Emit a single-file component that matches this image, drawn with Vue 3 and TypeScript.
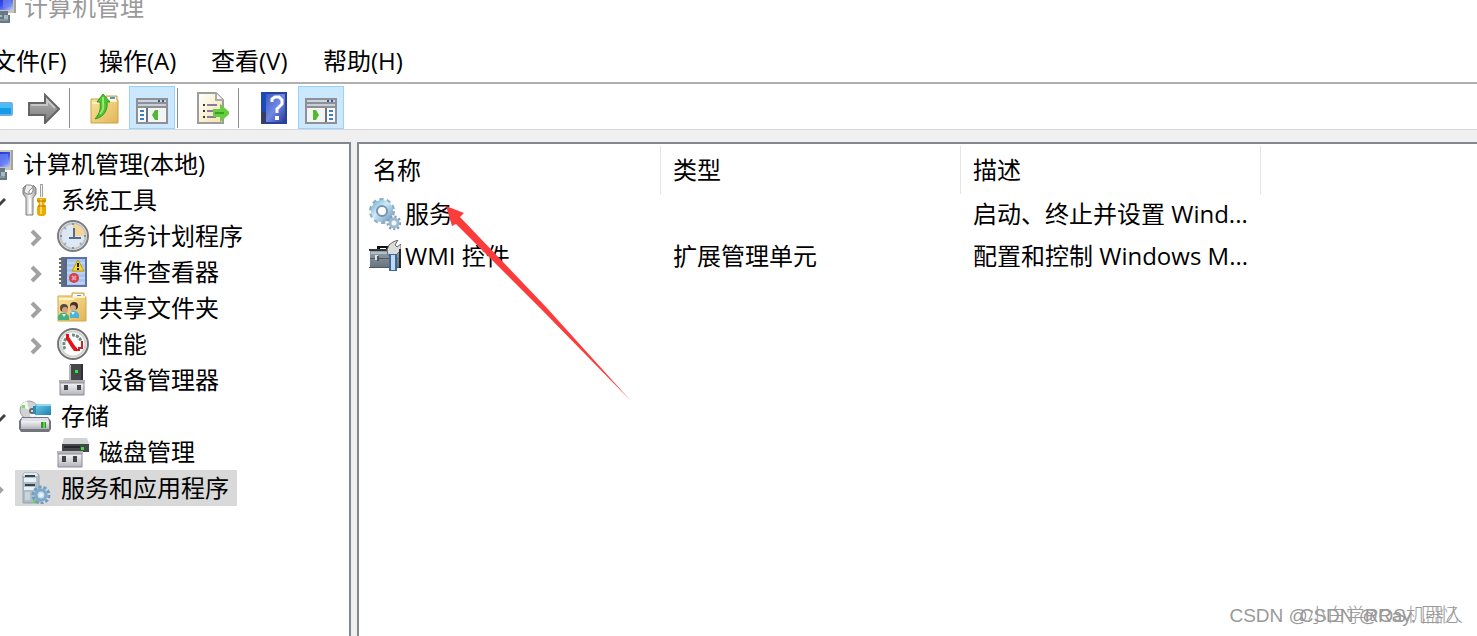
<script setup lang="ts">
interface TreeNode {
  id: string
  label: string
  icon: string
  level: number
  state: 'open' | 'closed' | 'leaf'
  selected?: boolean
}

interface ServiceRow {
  name: string
  icon: string
  type: string
  description: string
}

const menus: string[] = ['文件(F)', '操作(A)', '查看(V)', '帮助(H)']

const nodes: TreeNode[] = [
  { id: 'root', label: '计算机管理(本地)', icon: 'computer', level: 0, state: 'leaf' },
  { id: 'tools', label: '系统工具', icon: 'tools', level: 1, state: 'open' },
  { id: 'tasks', label: '任务计划程序', icon: 'clock', level: 2, state: 'closed' },
  { id: 'events', label: '事件查看器', icon: 'events', level: 2, state: 'closed' },
  { id: 'shares', label: '共享文件夹', icon: 'shared', level: 2, state: 'closed' },
  { id: 'perf', label: '性能', icon: 'gauge', level: 2, state: 'closed' },
  { id: 'devices', label: '设备管理器', icon: 'device', level: 2, state: 'leaf' },
  { id: 'storage', label: '存储', icon: 'storage', level: 1, state: 'open' },
  { id: 'disks', label: '磁盘管理', icon: 'disk', level: 2, state: 'leaf' },
  { id: 'services', label: '服务和应用程序', icon: 'server', level: 1, state: 'closed', selected: true },
]

const columns: string[] = ['名称', '类型', '描述']

const rows: ServiceRow[] = [
  { name: '服务', icon: 'gears', type: '', description: '启动、终止并设置 Wind...' },
  { name: 'WMI 控件', icon: 'toolbox', type: '扩展管理单元', description: '配置和控制 Windows M...' },
]
</script>

<template>
  <div class="window">
    <svg class="sprites" aria-hidden="true">
      <defs>
        <linearGradient id="gScreen" x1="0" y1="0" x2="1" y2="1">
          <stop offset="0" stop-color="#1a20c8" /><stop offset=".55" stop-color="#3c50e8" /><stop offset="1" stop-color="#b8ccff" />
        </linearGradient>
        <linearGradient id="gArrow" x1="0" y1="0" x2="0" y2="1">
          <stop offset="0" stop-color="#b4b4b4" /><stop offset="1" stop-color="#7c7c7c" />
        </linearGradient>
        <linearGradient id="gFolder" x1="0" y1="0" x2="1" y2="1">
          <stop offset="0" stop-color="#fbe6a0" /><stop offset="1" stop-color="#e2b658" />
        </linearGradient>
        <linearGradient id="gHelp" x1="0" y1="0" x2="1" y2="1">
          <stop offset="0" stop-color="#3c5cc4" /><stop offset=".5" stop-color="#7088e4" /><stop offset="1" stop-color="#2c3c98" />
        </linearGradient>
        <linearGradient id="gPage" x1="0" y1="0" x2="1" y2="1">
          <stop offset="0" stop-color="#ffffff" /><stop offset="1" stop-color="#f4e2a8" />
        </linearGradient>
        <linearGradient id="gMetal" x1="0" y1="0" x2="1" y2="0">
          <stop offset="0" stop-color="#9c9c9c" /><stop offset=".5" stop-color="#f4f4f4" /><stop offset="1" stop-color="#a0a0a0" />
        </linearGradient>
        <linearGradient id="gGear" x1="0" y1="0" x2="1" y2="1">
          <stop offset="0" stop-color="#8fb9d8" /><stop offset=".4" stop-color="#cceaf8" /><stop offset="1" stop-color="#80a6c4" />
        </linearGradient>
        <linearGradient id="gCase" x1="0" y1="0" x2="0" y2="1">
          <stop offset="0" stop-color="#93a0aa" /><stop offset="1" stop-color="#65727c" />
        </linearGradient>
        <linearGradient id="gDrive" x1="0" y1="0" x2="0" y2="1">
          <stop offset="0" stop-color="#f4f4f6" /><stop offset="1" stop-color="#b4b4bc" />
        </linearGradient>
        <linearGradient id="gCyan" x1="0" y1="0" x2="1" y2="1">
          <stop offset="0" stop-color="#74cdec" /><stop offset="1" stop-color="#1c7fae" />
        </linearGradient>
      </defs>

      <symbol id="computer" viewBox="0 0 32 32">
        <path d="M8 2h24v20H8z" fill="#c9c6b8" />
        <path d="M10 4h19v15H10z" fill="url(#gScreen)" />
        <path d="M19 6h8v10h-8z" fill="#6f86f4" opacity=".7" />
        <path d="M30 2h2v20h-2z" fill="#a5a298" />
        <path d="M10 20h14v4h2v8H8v-8h2z" fill="#667886" />
        <path d="M14 24h4v2h-4zM20 24h4v4h-4z" fill="#a8b8c0" />
        <path d="M8 28h16v2H8z" fill="#8496a0" />
      </symbol>

      <symbol id="tools" viewBox="0 0 32 32">
        <path d="M7 1L4 4v6l3 4v17h7V14l3-4V4l-3-3v6l-2 3H9L7 8z" fill="url(#gMetal)" stroke="#808080" />
        <path d="M7 1h5l2 2-4 4v3H8L5 8z" fill="#ececec" stroke="#8c8c8c" />
        <path d="M10 14h2v15h-2z" fill="#fff" />
        <path d="M21 0h3v13h-3z" fill="#a2a2a2" /><path d="M22 1h1v12h-1z" fill="#eee" />
        <path d="M18 14h9v3l-2 3 2 3v7l-2 2h-5l-2-2v-7l2-3-2-3z" fill="#eea900" />
        <path d="M21 15h2v15h-2z" fill="#ffdb60" />
        <path d="M18 17h9M19 22h8" stroke="#b07400" />
      </symbol>

      <symbol id="clock" viewBox="0 0 32 32">
        <circle cx="16" cy="16" r="15" fill="#e9edf0" stroke="#7c7c7c" stroke-width="2" />
        <circle cx="16" cy="16" r="12.5" fill="#dce9f4" stroke="#c4c4c4" stroke-width="2" />
        <path d="M16 16V4a12 12 0 0 1 12 12z" fill="#f2d49c" />
        <path d="M17 8v10h7M12 18h5" fill="none" stroke="#586c80" stroke-width="2" />
        <path d="M15 3h2v2h-2zM15 27h2v2h-2zM3 15h2v2H3zM27 15h2v2h-2z" fill="#8496a4" />
        <path d="M7 7l2 2M7 25l2-2M25 25l-2-2" stroke="#a0acb8" stroke-width="2" />
      </symbol>

      <symbol id="events" viewBox="0 0 32 32">
        <path d="M4 1h26v30H4z" fill="#5a70ac" />
        <path d="M8 3h20v26H8z" fill="#a9c5ec" />
        <path d="M8 7h20M8 12h20M8 17h20M8 22h20M8 27h20" stroke="#bcd2f2" stroke-width="2" />
        <path d="M6 2h4v28H6z" fill="#54678c" />
        <path d="M2 3h6M2 7h6M2 11h6M2 15h6M2 19h6M2 23h6M2 27h6" stroke="#6b6b6b" stroke-width="2" />
        <path d="M21 4l6 11H15z" fill="#f8d728" stroke="#bd9b00" />
        <path d="M20 7h2v4h-2zM20 12h2v2h-2z" fill="#222" />
        <circle cx="17" cy="22" r="5" fill="#d13f4c" />
        <path d="M15 20l4 4m0-4l-4 4" stroke="#ee9aa2" stroke-width="2" />
      </symbol>

      <symbol id="shared" viewBox="0 0 32 32">
        <path d="M1 4h14V1h12v4h2v24H1z" fill="url(#gFolder)" stroke="#d2a64b" />
        <path d="M16 2h10v3H16z" fill="#fff" /><path d="M20 3h4v2h-4z" fill="#4a9ae0" />
        <path d="M2 7h14l2-2h10" fill="none" stroke="#fff4c8" stroke-width="2" />
        <circle cx="7" cy="16" r="4" fill="#544c40" /><circle cx="8" cy="18" r="3" fill="#d6a078" />
        <path d="M1 28v-4l3-3h5l3 3v4z" fill="#45b080" /><path d="M5 22l2 3 2-3z" fill="#dff8ed" />
        <circle cx="17" cy="14" r="4" fill="#40322e" /><circle cx="16" cy="16" r="3" fill="#dca882" />
        <path d="M13 26v-5l2-2h4l3 3v4z" fill="#4cb3d5" /><path d="M14 20l2 3 2-3z" fill="#e0f8ff" />
      </symbol>

      <symbol id="gauge" viewBox="0 0 32 32">
        <circle cx="16" cy="16" r="15" fill="#f8f8f8" stroke="#747474" stroke-width="2" />
        <circle cx="16" cy="16" r="12.5" fill="#fff" stroke="#d2d2d2" stroke-width="2" />
        <path d="M8 21a9 9 0 0 1 3-12m4-2a9 9 0 0 1 9 6" fill="none" stroke="#6e8c80" stroke-width="3" stroke-dasharray="3 1" />
        <path d="M25 13v7h-3v2h-3" stroke="#d42020" stroke-width="2" fill="none" />
        <path d="M9 6h3v3l2 3 2 3 2 3 2 2v3h-3l-3-4-3-5-2-3z" fill="#e80f16" />
      </symbol>

      <symbol id="device" viewBox="0 0 32 32">
        <path d="M13 0h12v18H13z" fill="#45484a" /><path d="M12 1h2v17h-2z" fill="#b5b5b5" />
        <path d="M24 0h2v18h-2z" fill="#2e3032" /><path d="M18 6h3v3h-3z" fill="#38e040" />
        <path d="M2 16h26v3H2z" fill="#b0b0b4" /><path d="M3 19h24v12H3z" fill="url(#gDrive)" stroke="#8c8c94" />
        <path d="M7 21h4v5H7zM20 21h4v5h-4z" fill="#3f4246" />
      </symbol>

      <symbol id="storage" viewBox="0 0 32 32">
        <circle cx="10" cy="10" r="9" fill="#d0d2d4" stroke="#9c9c9c" />
        <path d="M10 10L2 6a9 9 0 0 1 6-5zM10 10l8 5a9 9 0 0 1-6 4z" fill="#f5f5f5" />
        <circle cx="13" cy="11" r="3" fill="#666" /><circle cx="13" cy="11" r="1" fill="#fff" />
        <path d="M3 5h3v3H3z" fill="#77e060" />
        <path d="M16 4h16v11H16z" fill="url(#gCyan)" /><path d="M18 4h14v2H18z" fill="#90daf3" />
        <path d="M14 6h3v8h-3z" fill="#3189b0" />
        <path d="M3 17h26l3 4v8l-2 3H2l-2-3v-8z" fill="#73747c" />
        <path d="M3 18h26l1 3H2z" fill="#e0e0e8" /><path d="M2 21h28v8H2z" fill="url(#gDrive)" />
        <path d="M22 22h5v6h-5z" fill="#3d8d38" /><path d="M24 22h2v6h-2z" fill="#4bdd3f" />
      </symbol>

      <symbol id="disk" viewBox="0 0 32 32">
        <path d="M7 2h23l2 6H5z" fill="#d1d3d4" /><path d="M5 8h27v8H5z" fill="#444749" />
        <path d="M7 10h16v2H7z" fill="#24282a" /><path d="M24 11h3v3h-3z" fill="#37e13b" />
        <path d="M0 15h26v3H0z" fill="#b6b6ba" /><path d="M1 18h24v13H1z" fill="url(#gDrive)" stroke="#8c8c94" />
        <path d="M5 20h4v6H5zM16 20h4v6h-4z" fill="#3f4246" />
      </symbol>

      <symbol id="server" viewBox="0 0 32 32">
        <path d="M5 1h13l2 2v28H4V3z" fill="#aebdc6" stroke="#93a4ae" />
        <path d="M5 1h13l1 3H4z" fill="#dfe8ec" /><path d="M6 3h10v2H6zM6 12h10v2H6z" fill="#34454e" />
        <path d="M5 6h12v4H5zM5 15h12v3H5z" fill="#e8f2f6" /><path d="M6 20h5v8H6z" fill="#c9d5dc" />
        <path d="M14 28h4v3h-4z" fill="#76d44a" />
        <circle cx="22" cy="23" r="8" fill="none" stroke="#6b9dc6" stroke-width="3" stroke-dasharray="3 2" />
        <circle cx="22" cy="23" r="5" fill="#c7dced" stroke="#7ca8ca" stroke-width="3" /><circle cx="22" cy="23" r="2" fill="#edf5fa" />
      </symbol>

      <symbol id="gears" viewBox="0 0 32 32">
        <circle cx="13" cy="13" r="11" fill="none" stroke="#86b0cc" stroke-width="4" stroke-dasharray="4 3" />
        <circle cx="13" cy="13" r="8" fill="none" stroke="url(#gGear)" stroke-width="6" />
        <circle cx="13" cy="13" r="5" fill="#fff" stroke="#7595ae" stroke-width="2" />
        <circle cx="25" cy="25" r="6" fill="none" stroke="#7d9dba" stroke-width="3" stroke-dasharray="2 2" />
        <circle cx="25" cy="25" r="4" fill="#f6fafc" stroke="#9dbacf" stroke-width="3" />
      </symbol>

      <symbol id="toolbox" viewBox="0 0 32 32">
        <path d="M8 6h12v4h-3V8H11v2H8z" fill="#111" />
        <path d="M1 10h29v18H1z" fill="url(#gCase)" /><path d="M0 9h30v2H0z" fill="#2f383e" />
        <path d="M2 12h26v2H2z" fill="#b4c0c7" /><path d="M1 18h28v1H1zM0 27h30v1H0z" fill="#4d5961" />
        <path d="M6 15h3v5H6z" fill="#dfe5e7" /><path d="M8 16h2v5H8z" fill="#4a545a" />
        <path d="M18 10l2-5 4-3 5-2-3 5 2 2 4-3v6l-5 5h-8z" fill="#dcdcdc" stroke="#666" />
        <path d="M20 14h8v17h-8z" fill="#3f6795" /><path d="M22 15h4v15h-4z" fill="#bfdaf5" />
        <path d="M30 9h2v19h-2z" fill="#22282c" />
      </symbol>

      <symbol id="back" viewBox="0 0 32 32">
        <path d="M1 16L15 2v8h15q2 0 2 2v10q0 2-2 2H15v8z" fill="#6eaee0" />
        <path d="M4 16l9-9v5h17v10H13v5z" fill="#169be8" /><path d="M13 12h17v4H13z" fill="#46bdf6" />
      </symbol>

      <symbol id="forward" viewBox="0 0 32 32">
        <path d="M1 11h16V3l14 14-14 14v-8H1z" fill="url(#gArrow)" stroke="#656565" stroke-width="2" />
        <path d="M3 13h16V8l8 8" fill="none" stroke="#c6c6c6" stroke-width="2" />
      </symbol>

      <symbol id="up" viewBox="0 0 32 32">
        <path d="M2 7h15V4h11v4h1v23H2z" fill="url(#gFolder)" stroke="#c9a14f" />
        <path d="M18 5h9v3h-9z" fill="#fff" /><path d="M21 5h5v2h-5z" fill="#4a98dd" />
        <path d="M3 11h13l3-2h9" fill="none" stroke="#fff2bd" stroke-width="2" />
        <path d="M14 2l7 8h-3c1 8-3 15-12 17 5-6 6-10 5-17H8z" fill="#4fc332" stroke="#37981f" />
        <path d="M14 5v6c1 5 0 8-3 11" fill="none" stroke="#94ea73" stroke-width="2" />
      </symbol>

      <symbol id="paneLeft" viewBox="0 -2 32 32">
        <path d="M0 4h32v26H0z" fill="#8d9095" /><path d="M2 6h28v2H2z" fill="#cbd4e3" />
        <path d="M22 6h2v2h-2zM26 6h2v2h-2z" fill="#445480" /><path d="M2 10h28v2H2z" fill="#c9ced8" />
        <path d="M2 14h8v14H2z" fill="#f9f9f9" /><path d="M10 14h2v14h-2z" fill="#687284" /><path d="M12 14h18v14H12z" fill="#f4f4f4" />
        <path d="M4 16h4v2H4zM4 20h4v2H4zM4 24h4v2H4z" fill="#3d80c5" />
        <path d="M22 16v10h-3l-3-5 3-5z" fill="#52b934" />
      </symbol>

      <symbol id="paneRight" viewBox="0 -2 32 32">
        <path d="M0 4h32v26H0z" fill="#8d9095" /><path d="M2 6h28v2H2z" fill="#cbd4e3" />
        <path d="M22 6h2v2h-2zM26 6h2v2h-2z" fill="#445480" /><path d="M2 10h28v2H2z" fill="#c9ced8" />
        <path d="M2 14h18v14H2z" fill="#f4f4f4" /><path d="M20 14h2v14h-2z" fill="#687284" /><path d="M22 14h8v14h-8z" fill="#f9f9f9" />
        <path d="M24 16h4v2h-4zM24 20h4v2h-4zM24 24h4v2h-4z" fill="#3d80c5" />
        <path d="M8 16v10h3l3-5-3-5z" fill="#52b934" />
      </symbol>

      <symbol id="export" viewBox="0 0 32 32">
        <path d="M1 1h18l7 7v23H1z" fill="url(#gPage)" stroke="#9d9d9d" stroke-width="2" />
        <path d="M19 1v7h7" fill="#fff" stroke="#ababab" stroke-width="2" />
        <path d="M6 12h2v2H6zM6 18h2v2H6zM6 24h2v2H6z" fill="#373737" />
        <path d="M10 12h10v2H10zM10 18h8v2h-8zM10 24h9v2h-9z" fill="#887d99" />
        <path d="M17 18h7v-4l8 7-8 7v-4h-7z" fill="#5fd237" stroke="#6cc84a" stroke-width="2" /><path d="M18 20h9v2h-9z" fill="#36a51e" />
      </symbol>

      <symbol id="help" viewBox="0 0 32 32">
        <path d="M3 0h26v32H3z" fill="#26429c" /><path d="M8 2h19v28H8z" fill="url(#gHelp)" />
        <path d="M3 0h5v32H3z" fill="#1c49b8" /><path d="M3 20h5v12H3z" fill="#383e63" />
        <path d="M14 10V7l3-2h4l3 3v4l-5 5v4" fill="none" stroke="#fff" stroke-width="3" />
        <path d="M17 24h4v4h-4z" fill="#fff" />
      </symbol>
    </svg>

    <header class="titlebar">
      <svg class="icon"><use href="#computer" /></svg>
      <span class="title">计算机管理</span>
    </header>

    <nav class="menubar" aria-label="菜单">
      <button v-for="m in menus" :key="m" type="button" class="menu">{{ m }}</button>
    </nav>

    <div class="toolbar" role="toolbar">
      <button type="button" class="tool" aria-label="后退"><svg class="icon"><use href="#back" /></svg></button>
      <button type="button" class="tool" aria-label="前进"><svg class="icon"><use href="#forward" /></svg></button>
      <i class="divider"></i>
      <button type="button" class="tool" aria-label="上一级"><svg class="icon"><use href="#up" /></svg></button>
      <button type="button" class="tool active" aria-label="控制台树"><svg class="icon"><use href="#paneLeft" /></svg></button>
      <i class="divider"></i>
      <button type="button" class="tool" aria-label="导出列表"><svg class="icon"><use href="#export" /></svg></button>
      <i class="divider"></i>
      <button type="button" class="tool" aria-label="帮助"><svg class="icon"><use href="#help" /></svg></button>
      <button type="button" class="tool active" aria-label="操作窗格"><svg class="icon"><use href="#paneRight" /></svg></button>
    </div>

    <main class="panes">
      <ul class="tree" role="tree">
        <li v-for="n in nodes" :key="n.id" class="node" :class="'level' + n.level" role="treeitem" :aria-selected="!!n.selected">
          <span class="toggle">
            <svg v-if="n.state === 'closed'" class="chevron" viewBox="0 0 16 18"><path d="M4 2l7 7-7 7" /></svg>
            <svg v-else-if="n.state === 'open'" class="chevron dark" viewBox="0 0 16 18"><path d="M1 6l7 7 7-7" /></svg>
          </span>
          <button type="button" class="entry" :class="{ selected: n.selected }">
            <svg class="icon"><use :href="'#' + n.icon" /></svg>
            <span>{{ n.label }}</span>
          </button>
        </li>
      </ul>

      <section class="list">
        <table class="grid">
          <thead>
            <tr><th v-for="c in columns" :key="c" scope="col">{{ c }}</th></tr>
          </thead>
          <tbody>
            <tr v-for="r in rows" :key="r.name">
              <td>
                <div class="name"><svg class="icon"><use :href="'#' + r.icon" /></svg><span>{{ r.name }}</span></div>
              </td>
              <td>{{ r.type }}</td>
              <td>{{ r.description }}</td>
            </tr>
          </tbody>
        </table>
        <svg class="pointer" viewBox="0 0 186 196" aria-hidden="true">
          <path d="M0 0L18 7l-4 4L100 101 185 195 96 104 10 18l-4 2z" />
        </svg>
      </section>
    </main>

    <div class="watermark first">CSDN @小白学ROS机器人</div>
    <div class="watermark second">CSDN @Ray. 回忆</div>
  </div>
</template>

<style>
body {
  margin: 0;
}
</style>

<style scoped>
.window {
  position: relative;
  display: flex;
  flex-direction: column;
  min-height: 100vh;
  overflow: hidden;
  background: #fff;
  color: #000;
  font: 24px/36px "Open Sans", "Noto Sans CJK SC", sans-serif;
}
.sprites {
  position: absolute;
  width: 0;
  height: 0;
}
button {
  margin: 0;
  padding: 0;
  border: 0;
  background: none;
  color: inherit;
  font: inherit;
  white-space: nowrap;
}
.icon {
  display: block;
  flex: none;
  width: 32px;
  height: 32px;
}
.titlebar {
  display: flex;
  align-items: center;
  gap: 8px;
  height: 32px;
  margin: -9px 0 0 -16px;
  color: #999;
}
.menubar {
  display: flex;
  gap: 32px;
  height: 39px;
  padding-top: 20px;
  margin-left: -8px;
}
.menu {
  height: 36px;
  min-width: 80px;
  text-align: left;
}
.menu:first-child {
  min-width: 75px;
}
.toolbar {
  display: flex;
  align-items: center;
  gap: 1px;
  box-sizing: border-box;
  height: 48px;
  margin-left: -26px;
  border-top: 2px solid #b0b0b0;
  border-bottom: 1px solid #d8d8d8;
}
.tool {
  display: flex;
  align-items: center;
  justify-content: center;
  box-sizing: border-box;
  width: 46px;
  height: 43px;
  margin-top: 2px;
  padding-top: 1px;
}
.tool.active {
  background: #cce8ff;
  border: 1px solid #99d1ff;
}
.divider {
  width: 1px;
  height: 40px;
  margin: 2px 11px 0 1px;
  background: #8c8c8c;
}
.panes {
  display: flex;
  flex: 1;
  padding-top: 12px;
  background: #f0f0f0;
}
.tree {
  box-sizing: border-box;
  flex: none;
  width: 351px;
  margin: 0 6px 0 0;
  padding: 2px 0 0;
  list-style: none;
  background: #fff;
  border-top: 2px solid #828790;
  border-right: 2px solid #828790;
}
.node {
  display: flex;
  height: 36px;
}
.level0 {
  margin-left: -57px;
}
.level1 {
  margin-left: -19px;
}
.level2 {
  margin-left: 19px;
}
.toggle {
  display: flex;
  align-items: center;
  justify-content: center;
  box-sizing: border-box;
  width: 34px;
  padding-top: 3px;
}
.chevron {
  width: 16px;
  height: 18px;
  fill: none;
  stroke: #a2a2a2;
  stroke-width: 4;
}
.chevron.dark {
  stroke: #404040;
  stroke-width: 3;
}
.entry {
  display: flex;
  align-items: center;
  gap: 10px;
  padding: 0 8px 0 4px;
}
.entry.selected {
  background: #d9d9d9;
}
.list {
  position: relative;
  flex: 1;
  min-width: 0;
  padding: 2px 0 0 2px;
  background: #fff;
  border-top: 2px solid #828790;
  border-left: 2px solid #828790;
}
.grid {
  width: 900px;
  table-layout: fixed;
  border-collapse: separate;
  border-spacing: 0;
}
th {
  box-sizing: border-box;
  height: 48px;
  padding: 0 12px;
  border-right: 1px solid #e5e5e5;
  font-weight: inherit;
  text-align: left;
}
td {
  height: 40px;
  padding: 0 0 2px 12px;
  white-space: nowrap;
}
td:first-child {
  padding-left: 8px;
}
.name {
  display: flex;
  align-items: center;
  gap: 4px;
}
.pointer {
  position: absolute;
  left: 87px;
  top: 62px;
  width: 186px;
  height: 196px;
  fill: #fc3b3b;
}
.watermark {
  position: absolute;
  bottom: 6px;
  color: #999;
  font: 300 19px/28px "Liberation Sans", "Noto Sans CJK SC", sans-serif;
  white-space: nowrap;
}
.first {
  right: 14px;
}
.second {
  right: 18px;
}
</style>
